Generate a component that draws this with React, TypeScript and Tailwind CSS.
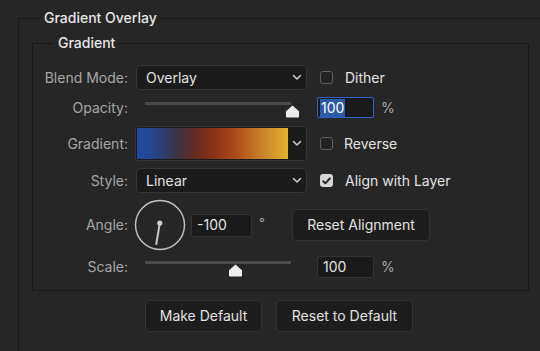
import React from "react";

const Chevron = () => (
  <svg width="10" height="7" viewBox="0 0 10 7" className="shrink-0">
    <polyline points="1.5,1.5 5,5 8.5,1.5" fill="none" stroke="#c8c8c8" strokeWidth="1.6" strokeLinecap="round" strokeLinejoin="round" />
  </svg>
);

const Checkbox = ({ checked = false }: { checked?: boolean }) =>
  checked ? (
    <div className="w-[13px] h-[13px] rounded-[3px] bg-[#d6d6d6] flex items-center justify-center shrink-0">
      <svg width="9" height="8" viewBox="0 0 9 8">
        <polyline points="1.2,4.2 3.4,6.3 7.8,1.5" fill="none" stroke="#262626" strokeWidth="1.9" strokeLinecap="round" strokeLinejoin="round" />
      </svg>
    </div>
  ) : (
    <div className="w-[13px] h-[13px] rounded-[3px] border border-[#5e5e5e] bg-[#222222] shrink-0" />
  );

const Thumb = () => (
  <svg width="15" height="13" viewBox="0 0 15 13">
    <path d="M7.5 0.6 L14 6.2 L14 11.5 Q14 12.5 13 12.5 L2 12.5 Q1 12.5 1 11.5 L1 6.2 Z" fill="#eeeeee" />
  </svg>
);

const Label = ({ children }: { children: React.ReactNode }) => (
  <div className="w-[95px] mr-[8px] text-right text-[#a6a6a6] shrink-0">{children}</div>
);

const Select = ({ value }: { value: string }) => (
  <div className="w-[171px] h-[25px] rounded-[4px] border border-[#353535] bg-[#1b1b1b] flex items-center pl-[9px] pr-[4px] shrink-0">
    <span className="flex-1 text-[#e2e2e2]">{value}</span>
    <Chevron />
  </div>
);

const Slider = ({ pos }: { pos: number }) => (
  <div className="relative w-[171px] h-full shrink-0">
    <div className="absolute left-[9px] w-[146px] h-[3px] bg-[#4a4a4a]" style={{ top: 5 }} />
    <div className="absolute top-[8px]" style={{ left: pos - 136 - 7.5 }}>
      <Thumb />
    </div>
  </div>
);

export default function App() {
  return (
    <div className="w-[540px] h-[351px] overflow-hidden bg-[#262626] font-['Inter',sans-serif] text-[14px] leading-[20px]">
      <fieldset className="ml-[18px] mt-[8px] w-[600px] h-[400px] min-w-0 border border-[#181818]">
        <legend className="ml-[21px] px-[4px] leading-[20px] font-medium text-[#e6e6e6]">Gradient Overlay</legend>

        <fieldset className="ml-[13px] mt-[5px] w-[497px] min-w-0 border border-[#181818] pb-[12px]">
          <legend className="ml-[20px] px-[5px] leading-[20px] font-medium text-[#e6e6e6]">Gradient</legend>

          {/* Blend Mode */}
          <div className="mt-[12px] h-[25px] flex items-center">
            <Label>Blend Mode:</Label>
            <Select value="Overlay" />
            <div className="ml-[13px]"><Checkbox /></div>
            <span className="ml-[12px] text-[#e2e2e2]">Dither</span>
          </div>

          {/* Opacity */}
          <div className="mt-[7px] h-[21px] flex items-center">
            <Label>Opacity:</Label>
            <Slider pos={292} />
            <div className="ml-[10px] w-[57px] h-[21px] rounded-[2px] border-[1.5px] border-[#2f62c4] bg-[#1a1a1a] flex items-center pl-[2px] shrink-0">
              <span className="bg-[#2c5aa6] text-white px-[1px] leading-[18px]">100</span>
            </div>
            <span className="ml-[7px] text-[#a6a6a6]">%</span>
          </div>

          {/* Gradient */}
          <div className="mt-[8px] h-[35px] flex items-center">
            <Label>Gradient:</Label>
            <div className="ml-[-1px] w-[172px] h-[35px] rounded-[3px] border border-[#353535] bg-[#1b1b1b] flex items-stretch py-[1px] pl-[1px] shrink-0">
              <div className="w-[151px] bg-[linear-gradient(to_right,#1d4ca6_0%,#24468f_10%,#3b3545_26%,#6a2c1e_40%,#8a3414_52%,#a8481c_64%,#c8802a_82%,#e2b22e_100%)]" />
              <div className="flex-1 flex items-center justify-center">
                <Chevron />
              </div>
            </div>
            <div className="ml-[13px]"><Checkbox /></div>
            <span className="ml-[11px] text-[#e2e2e2]">Reverse</span>
          </div>

          {/* Style */}
          <div className="mt-[7px] h-[25px] flex items-center">
            <Label>Style:</Label>
            <Select value="Linear" />
            <div className="ml-[13px]"><Checkbox checked /></div>
            <span className="ml-[12px] text-[#e2e2e2]">Align with Layer</span>
          </div>

          {/* Angle */}
          <div className="mt-[7px] h-[50px] flex items-center">
            <Label>Angle:</Label>
            <svg width="52" height="52" viewBox="0 0 52 52" className="ml-[-2px] shrink-0">
              <circle cx="26" cy="26" r="24.5" fill="none" stroke="#c4c4c4" strokeWidth="1.4" />
              <line x1="25.8" y1="24" x2="22.3" y2="45" stroke="#c4c4c4" strokeWidth="2" strokeLinecap="round" />
              <circle cx="25.8" cy="24" r="2.6" fill="#d0d0d0" />
            </svg>
            <div className="ml-[5px] w-[61px] h-[23px] rounded-[2px] border border-[#333333] bg-[#1a1a1a] flex items-center pl-[5px] text-[#e2e2e2] shrink-0">-100</div>
            <span className="ml-[7px] w-[33px] self-start mt-[13px] text-[#a6a6a6] text-[13px]">°</span>
            <div className="w-[138px] h-[32px] rounded-[4px] border border-[#333333] bg-[#1d1d1d] flex items-center justify-center text-[#e2e2e2] shrink-0">Reset Alignment</div>
          </div>

          {/* Scale */}
          <div className="mt-[6px] h-[22px] flex items-center">
            <Label>Scale:</Label>
            <Slider pos={235} />
            <div className="ml-[10px] w-[57px] h-[22px] rounded-[2px] border border-[#333333] bg-[#1a1a1a] flex items-center pl-[5px] text-[#e2e2e2] shrink-0">100</div>
            <span className="ml-[7px] text-[#a6a6a6]">%</span>
          </div>
        </fieldset>

        <div className="mt-[9px] pl-[126px] flex gap-[14px]">
          <div className="w-[117px] h-[32px] rounded-[4px] border border-[#333333] bg-[#1d1d1d] flex items-center justify-center text-[#e2e2e2]">Make Default</div>
          <div className="w-[137px] h-[32px] rounded-[4px] border border-[#333333] bg-[#1d1d1d] flex items-center justify-center text-[#e2e2e2]">Reset to Default</div>
        </div>
      </fieldset>
    </div>
  );
}
